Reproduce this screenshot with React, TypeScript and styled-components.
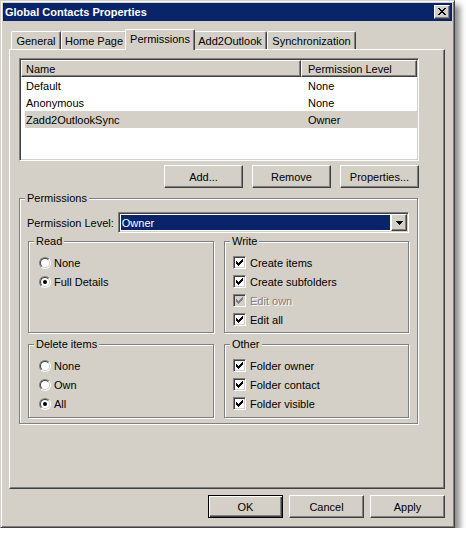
import React from "react";
import styled, { createGlobalStyle, css } from "styled-components";

const face = "#d4d0c8";
const shadow = "#808080";
const dark = "#404040";
const navy = "#0a246a";

const GlobalStyle = createGlobalStyle`
  html, body {
    margin: 0;
    padding: 0;
    background: #fff;
  }
  body {
    font-family: "Liberation Sans", Arial, sans-serif;
    font-size: 11px;
    color: #000;
  }
  * {
    box-sizing: border-box;
  }
`;

const raised = css`
  border: 1px solid;
  border-color: #fff ${dark} ${dark} #fff;
  box-shadow: inset -1px -1px 0 ${shadow};
`;

const sunken = css`
  border: 1px solid;
  border-color: ${shadow} #fff #fff ${shadow};
  box-shadow: inset 1px 1px 0 ${dark}, inset -1px -1px 0 ${face};
`;

const etched = css`
  border: 1px solid ${shadow};
  box-shadow: inset 1px 1px 0 #fff, 1px 1px 0 #fff;
`;

const Window = styled.div`
  width: 455px;
  height: 528px;
  background: ${face};
  border: 1px solid;
  border-color: ${face} ${dark} ${dark} ${face};
  box-shadow: inset 1px 1px 0 #fff, inset -1px -1px 0 ${shadow},
    5px 5px 6px rgba(0, 0, 0, 0.45);
  padding: 2px;
  display: flex;
  flex-direction: column;
`;

const TitleBar = styled.div`
  height: 18px;
  flex: none;
  background: ${navy};
  color: #fff;
  font-weight: bold;
  display: flex;
  align-items: center;
  justify-content: space-between;
  padding: 0 2px 0 2px;
`;

const CloseBtn = styled.div`
  width: 16px;
  height: 14px;
  background: ${face};
  ${raised};
  display: flex;
  align-items: center;
  justify-content: center;
  padding-bottom: 1px;
`;

const Body = styled.div`
  padding: 8px 7px 0 6px;
  display: flex;
  flex-direction: column;
`;

const TabRow = styled.div`
  height: 20px;
  display: flex;
  align-items: flex-end;
  padding-left: 2px;
`;

const Tab = styled.div<{ $w: number; $active?: boolean }>`
  width: ${(p) => p.$w + (p.$active ? 4 : 0)}px;
  height: 18px;
  display: flex;
  align-items: center;
  justify-content: center;
  background: ${face};
  border-top: 1px solid #fff;
  border-left: 1px solid #fff;
  border-right: 1px solid ${dark};
  box-shadow: inset -1px 0 0 ${shadow};
  border-radius: 2px 2px 0 0;
  white-space: nowrap;
  ${(p) =>
    p.$active &&
    css`
      position: relative;
      z-index: 1;
      height: 21px;
      margin: 0 -2px -1px -2px;
      padding-bottom: 2px;
    `}
`;

const Panel = styled.div`
  height: 440px;
  border: 1px solid;
  border-color: #fff ${dark} ${dark} #fff;
  box-shadow: inset -1px -1px 0 ${shadow};
  padding: 8px 0 0 9px;
  display: flex;
  flex-direction: column;
`;

const Column = styled.div`
  width: 400px;
  display: flex;
  flex-direction: column;
`;

const ListView = styled.div`
  height: 103px;
  background: #fff;
  ${sunken};
  padding: 1px;
`;

const Header = styled.div`
  display: flex;
  height: 17px;
`;

const HeaderCell = styled.div<{ $w: number; $pad: number }>`
  width: ${(p) => p.$w}px;
  height: 17px;
  background: ${face};
  ${raised};
  padding-left: ${(p) => p.$pad}px;
  display: flex;
  align-items: center;
`;

const Row = styled.div<{ $selected?: boolean }>`
  display: flex;
  height: 17px;
  align-items: center;
  margin-left: 4px;
  background: ${(p) => (p.$selected ? face : "transparent")};
`;

const Cell = styled.div<{ $w: number; $pad: number }>`
  width: ${(p) => p.$w}px;
  padding-left: ${(p) => p.$pad}px;
  white-space: nowrap;
`;

const ButtonRow = styled.div<{ $gap: number }>`
  display: flex;
  justify-content: flex-end;
  gap: ${(p) => p.$gap}px;
`;

const ListButtons = styled(ButtonRow)`
  margin-top: 4px;
`;

const Footer = styled(ButtonRow)`
  margin-top: 6px;
`;

const Btn = styled.button<{ $w: number; $default?: boolean }>`
  width: ${(p) => p.$w}px;
  height: 23px;
  font: inherit;
  color: #000;
  background: ${face};
  padding: 0;
  ${raised};
  ${(p) =>
    p.$default &&
    css`
      border-color: #000;
      box-shadow: inset 1px 1px 0 #fff, inset -1px -1px 0 ${dark},
        inset -2px -2px 0 ${shadow};
    `}
`;

const Group = styled.div<{ $pad?: number }>`
  position: relative;
  ${etched};
  padding-top: 11px;
  padding-left: ${(p) => p.$pad ?? 8}px;
`;

const OuterGroup = styled(Group)`
  width: 399px;
  margin-top: 10px;
  padding: 13px 8px 5px 8px;
`;

const GroupLabel = styled.span`
  position: absolute;
  top: -7px;
  left: 5px;
  padding: 0 2px;
  background: ${face};
  line-height: 13px;
  white-space: nowrap;
`;

const LevelRow = styled.div`
  display: flex;
  align-items: center;
  height: 21px;
`;

const LevelLabel = styled.div`
  width: 91px;
  margin-left: -1px;
`;

const Combo = styled.div`
  width: 292px;
  height: 21px;
  background: #fff;
  ${sunken};
  padding: 1px;
  display: flex;
`;

const ComboValue = styled.div`
  flex: 1;
  margin: 1px;
  background: ${navy};
  color: #fff;
  padding-left: 1px;
  display: flex;
  align-items: center;
`;

const ComboButton = styled.div`
  width: 16px;
  height: 17px;
  background: ${face};
  ${raised};
  display: flex;
  align-items: center;
  justify-content: center;
`;

const Grid = styled.div`
  margin-top: 8px;
  display: grid;
  grid-template-columns: 186px 185px;
  grid-template-rows: 92px 74px;
  column-gap: 10px;
  row-gap: 11px;
`;

const Item = styled.div<{ $gap: number }>`
  height: 19px;
  display: flex;
  align-items: center;
  gap: ${(p) => p.$gap}px;
`;

const ItemText = styled.span<{ $disabled?: boolean }>`
  white-space: nowrap;
  ${(p) =>
    p.$disabled &&
    css`
      color: ${shadow};
      text-shadow: 1px 1px 0 #fff;
    `}
`;

const RadioOuter = styled.span`
  width: 12px;
  height: 12px;
  flex: none;
  border-radius: 50%;
  border: 1px solid;
  border-color: ${shadow} #fff #fff ${shadow};
  display: flex;
  align-items: center;
  justify-content: center;
`;

const RadioInner = styled.span`
  width: 10px;
  height: 10px;
  border-radius: 50%;
  border: 1px solid;
  border-color: ${dark} ${face} ${face} ${dark};
  background: #fff;
  display: flex;
  align-items: center;
  justify-content: center;
`;

const Dot = styled.span`
  width: 4px;
  height: 4px;
  border-radius: 50%;
  background: #000;
`;

const CheckBox = styled.span<{ $disabled?: boolean }>`
  width: 13px;
  height: 13px;
  flex: none;
  ${sunken};
  background: ${(p) => (p.$disabled ? face : "#fff")};
  display: flex;
  align-items: center;
  justify-content: center;
`;

const PixelSvg = styled.svg`
  display: block;
`;

const Pixels: React.FC<{ rows: string[]; color: string }> = ({ rows, color }) => (
  <PixelSvg width={rows[0].length} height={rows.length} shapeRendering="crispEdges">
    {rows.flatMap((r, y) =>
      r
        .split("")
        .map((c, x) =>
          c === "x" ? <rect key={x + "-" + y} x={x} y={y} width={1} height={1} fill={color} /> : null
        )
    )}
  </PixelSvg>
);

const closeX = ["xx....xx", ".xx..xx.", "..xxxx..", "...xx...", "..xxxx..", ".xx..xx.", "xx....xx"];
const check = ["......x", ".....xx", "x...xxx", "xx.xxx.", "xxxxx..", ".xxx...", "..x...."];
const arrow = ["xxxxxxx", ".xxxxx.", "..xxx..", "...x..."];

const Radio: React.FC<{ label: string; on?: boolean }> = ({ label, on }) => (
  <Item $gap={3}>
    <RadioOuter>
      <RadioInner>{on && <Dot />}</RadioInner>
    </RadioOuter>
    <ItemText>{label}</ItemText>
  </Item>
);

const Check: React.FC<{ label: string; disabled?: boolean }> = ({ label, disabled }) => (
  <Item $gap={4}>
    <CheckBox $disabled={disabled}>
      <Pixels rows={check} color={disabled ? shadow : "#000"} />
    </CheckBox>
    <ItemText $disabled={disabled}>{label}</ItemText>
  </Item>
);

const tabs = [
  { name: "General", w: 50 },
  { name: "Home Page", w: 66 },
  { name: "Permissions", w: 66, active: true },
  { name: "Add2Outlook", w: 74 },
  { name: "Synchronization", w: 89 },
];

const users = [
  { name: "Default", level: "None" },
  { name: "Anonymous", level: "None" },
  { name: "Zadd2OutlookSync", level: "Owner", selected: true },
];

export default function App() {
  return (
    <>
      <GlobalStyle />
      <Window>
        <TitleBar>
          <span>Global Contacts Properties</span>
          <CloseBtn>
            <Pixels rows={closeX} color="#000" />
          </CloseBtn>
        </TitleBar>
        <Body>
          <TabRow>
            {tabs.map((t) => (
              <Tab key={t.name} $w={t.w} $active={t.active}>
                {t.name}
              </Tab>
            ))}
          </TabRow>
          <Panel>
            <Column>
              <ListView>
                <Header>
                  <HeaderCell $w={280} $pad={4}>Name</HeaderCell>
                  <HeaderCell $w={116} $pad={6}>Permission Level</HeaderCell>
                </Header>
                {users.map((u) => (
                  <Row key={u.name} $selected={u.selected}>
                    <Cell $w={276} $pad={1}>{u.name}</Cell>
                    <Cell $w={116} $pad={7}>{u.level}</Cell>
                  </Row>
                ))}
              </ListView>
              <ListButtons $gap={9}>
                <Btn $w={79}>Add...</Btn>
                <Btn $w={79}>Remove</Btn>
                <Btn $w={79}>Properties...</Btn>
              </ListButtons>
              <OuterGroup>
                <GroupLabel>Permissions</GroupLabel>
                <LevelRow>
                  <LevelLabel>Permission Level:</LevelLabel>
                  <Combo>
                    <ComboValue>Owner</ComboValue>
                    <ComboButton>
                      <Pixels rows={arrow} color="#000" />
                    </ComboButton>
                  </Combo>
                </LevelRow>
                <Grid>
                  <Group $pad={10}>
                    <GroupLabel>Read</GroupLabel>
                    <Radio label="None" />
                    <Radio label="Full Details" on />
                  </Group>
                  <Group>
                    <GroupLabel>Write</GroupLabel>
                    <Check label="Create items" />
                    <Check label="Create subfolders" />
                    <Check label="Edit own" disabled />
                    <Check label="Edit all" />
                  </Group>
                  <Group $pad={10}>
                    <GroupLabel>Delete items</GroupLabel>
                    <Radio label="None" />
                    <Radio label="Own" />
                    <Radio label="All" on />
                  </Group>
                  <Group>
                    <GroupLabel>Other</GroupLabel>
                    <Check label="Folder owner" />
                    <Check label="Folder contact" />
                    <Check label="Folder visible" />
                  </Group>
                </Grid>
              </OuterGroup>
            </Column>
          </Panel>
          <Footer $gap={6}>
            <Btn $w={75} $default>OK</Btn>
            <Btn $w={75}>Cancel</Btn>
            <Btn $w={75}>Apply</Btn>
          </Footer>
        </Body>
      </Window>
    </>
  );
}
